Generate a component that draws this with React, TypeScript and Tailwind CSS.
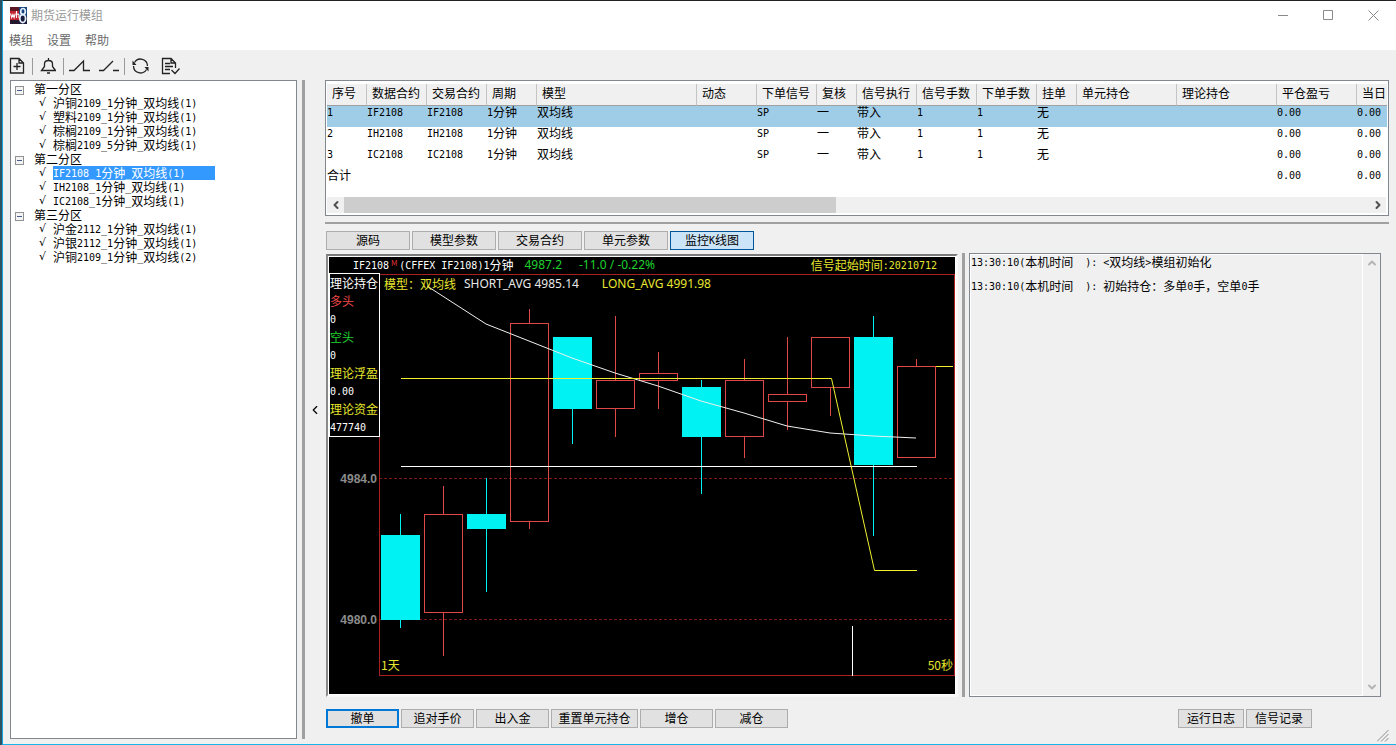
import { Fragment, type ReactNode } from 'react';
import { ChevronDown, ChevronLeft, ChevronRight, ChevronUp } from 'lucide-react';

const tree = [
    {
        name: '第一分区',
        items: ['沪铜2109_1分钟_双均线(1)', '塑料2109_1分钟_双均线(1)', '棕榈2109_1分钟_双均线(1)', '棕榈2109_5分钟_双均线(1)'],
    },
    {
        name: '第二分区',
        items: ['IF2108_1分钟_双均线(1)', 'IH2108_1分钟_双均线(1)', 'IC2108_1分钟_双均线(1)'],
    },
    {
        name: '第三分区',
        items: ['沪金2112_1分钟_双均线(1)', '沪银2112_1分钟_双均线(1)', '沪铜2109_1分钟_双均线(2)'],
    },
];
const selectedItem = 'IF2108_1分钟_双均线(1)';

const columns = [
    { title: '序号', width: 'w-[40px]' },
    { title: '数据合约', width: 'w-[60px]' },
    { title: '交易合约', width: 'w-[60px]' },
    { title: '周期', width: 'w-[50px]' },
    { title: '模型', width: 'w-[160px]' },
    { title: '动态', width: 'w-[60px]' },
    { title: '下单信号', width: 'w-[60px]' },
    { title: '复核', width: 'w-[40px]' },
    { title: '信号执行', width: 'w-[60px]' },
    { title: '信号手数', width: 'w-[60px]' },
    { title: '下单手数', width: 'w-[60px]' },
    { title: '挂单', width: 'w-[40px]' },
    { title: '单元持仓', width: 'w-[100px]' },
    { title: '理论持仓', width: 'w-[100px]' },
    { title: '平仓盈亏', width: 'w-[80px]' },
    { title: '当日', width: '' },
];

const rows = [
    ['1', 'IF2108', 'IF2108', '1分钟', '双均线', '', 'SP', '一', '带入', '1', '1', '无', '', '', '0.00', '0.00'],
    ['2', 'IH2108', 'IH2108', '1分钟', '双均线', '', 'SP', '一', '带入', '1', '1', '无', '', '', '0.00', '0.00'],
    ['3', 'IC2108', 'IC2108', '1分钟', '双均线', '', 'SP', '一', '带入', '1', '1', '无', '', '', '0.00', '0.00'],
    ['合计', '', '', '', '', '', '', '', '', '', '', '', '', '', '0.00', '0.00'],
];

const tabs = ['源码', '模型参数', '交易合约', '单元参数', '监控K线图'];

// [high, body top, body bottom, low, rising]
const candles: [number, number, number, number, boolean][] = [
    [240, 261, 346, 354, false],
    [212, 240, 338, 382, true],
    [204, 240, 255, 318, false],
    [35, 49, 247, 255, true],
    [63, 63, 135, 170, false],
    [42, 106, 134, 163, true],
    [78, 99, 106, 135, true],
    [106, 113, 163, 220, false],
    [85, 106, 162, 184, true],
    [63, 120, 127, 156, true],
    [63, 63, 113, 142, true],
    [42, 63, 191, 262, false],
    [85, 92, 183, 183, true],
];

const positionInfo = [
    { text: '理论持仓', color: 'text-white' },
    { text: '多头', color: 'text-[#f04848]' },
    { text: '0', color: 'text-white' },
    { text: '空头', color: 'text-[#1fd02f]' },
    { text: '0', color: 'text-white' },
    { text: '理论浮盈', color: 'text-[#e6e62e]' },
    { text: '0.00', color: 'text-white' },
    { text: '理论资金', color: 'text-[#e6e62e]' },
    { text: '477740', color: 'text-white' },
];

function Mixed({ text }: { text: string }) {
    return (
        <>
            {text.split(/([\x20-\x7e]+)/).map((part, i) =>
                i % 2 ? (
                    <span key={i} className="font-['DejaVu_Sans_Mono',monospace] text-[10px] leading-none align-[1px] whitespace-pre">{part}</span>
                ) : (
                    <Fragment key={i}>{part}</Fragment>
                )
            )}
        </>
    );
}

function TitleBar() {
    return (
        <header className="bg-white h-[49px] text-[12px]">
            <div className="flex items-center justify-between h-[28px] pl-[7px]">
                <div className="flex items-center gap-[4px]">
                    <svg width="17" height="17" viewBox="0 0 17 17" aria-hidden="true">
                        <rect width="17" height="17" fill="#1a1a3c" />
                        <rect width="9" height="5" fill="#5a1822" />
                        <rect y="4" width="9" height="9" fill="#c32530" />
                        <rect x="9" width="8" height="9" fill="#16407e" />
                        <rect y="13" width="9" height="4" fill="#25182e" />
                        <path d="M.5 6.500l1.200 4 1.200-3 1.200 3 1.200-4M6.500 4v7M6.500 8c1-1.500 2.500-1 2.500 0v3" stroke="#fff" strokeWidth="1.100" fill="none" />
                        <ellipse cx="13" cy="4.500" rx="2.300" ry="3" stroke="#e4f0fa" strokeWidth="1.700" fill="none" />
                        <ellipse cx="12.700" cy="11.500" rx="2.900" ry="4" stroke="#e4f0fa" strokeWidth="1.800" fill="none" />
                    </svg>
                    <h1 className="text-[#999999]">期货运行模组</h1>
                </div>
                <div className="flex text-[#8a8a8a]">
                    <button aria-label="最小化" className="w-[45px] h-[28px] grid place-items-center">
                        <svg width="10" height="10" stroke="currentColor"><path d="M0 5.500h10" /></svg>
                    </button>
                    <button aria-label="最大化" className="w-[45px] h-[28px] grid place-items-center">
                        <svg width="10" height="10" stroke="currentColor" fill="none"><path d="M.5.5h9v9h-9z" /></svg>
                    </button>
                    <button aria-label="关闭" className="w-[46px] h-[28px] grid place-items-center">
                        <svg width="11" height="11" stroke="currentColor"><path d="M.5.5l10 10M10.500.5l-10 10" /></svg>
                    </button>
                </div>
            </div>
            <nav className="flex gap-[14px] pl-[6px] text-[#6a6a6a] leading-[22px]">
                <button>模组</button>
                <button>设置</button>
                <button>帮助</button>
            </nav>
        </header>
    );
}

function ToolButton({ label, width, className = '', children }: { label: string; width: number; className?: string; children: ReactNode }) {
    return (
        <button aria-label={label} className={className}>
            <svg width={width} height="18" fill="none" stroke="#222" strokeWidth="1.300" className="block">
                {children}
            </svg>
        </button>
    );
}

function Divider() {
    return <div className="w-px h-[17px] bg-[#9a9a9a]" />;
}

function Toolbar() {
    return (
        <div className="flex items-center h-[30px] pl-[6px] pt-[2px]">
            <ToolButton label="新建" width={16} className="mr-[7px]">
                <path d="M1.500 1.500h8.500l4.500 4.500v10h-13zM10 1.500v4.500h4.500M8 6v7M4.500 9.500h7" />
            </ToolButton>
            <Divider />
            <ToolButton label="提醒" width={16} className="mx-[7px]">
                <path d="M1.500 13.500h14l-3-4V7c0-2.500-1.500-3.500-4-3.500S4.500 4.500 4.500 7v2.500zM8.500 3.500v-2.500M7 16h3" />
            </ToolButton>
            <Divider />
            <ToolButton label="启动" width={22} className="ml-[5px] mr-[7px]">
                <path d="M0 13.500h5L14.500 4v9.500H21" />
            </ToolButton>
            <ToolButton label="停止" width={22} className="mr-[4px]">
                <path d="M1 13.500h4.500L15 4M15 13.500h6" />
            </ToolButton>
            <Divider />
            <ToolButton label="刷新" width={19} className="ml-[6px] mr-[11px]">
                <path d="M3.500 5.500A7 7 0 0 1 16.500 9M15.500 12.500A7 7 0 0 1 2.500 9" />
                <path d="M1.500 3.500v4.500h4zM17.500 14.500V10h-4z" fill="#222" stroke="none" />
            </ToolButton>
            <ToolButton label="检查" width={19}>
                <path d="M9 16.500H1.500v-15h8.500l4.500 4.500V11M10 1.500v4.500h4.500M4 6.500h5M4 9.500h8M4 12.500h5M10.500 13l3.500 3.500 4.500-5" />
            </ToolButton>
        </div>
    );
}

function ModuleTree() {
    return (
        <aside className="w-[287px] shrink-0 bg-white border border-[#828790] pt-px text-[12px] leading-[14px]">
            <ul>
                {tree.map((group) => (
                    <li key={group.name}>
                        <div className="flex items-center h-[14px] pl-[4px] gap-[10px]">
                            <button aria-label={`收起${group.name}`} className="w-[9px] h-[9px] mt-[2px] border border-[#919191] bg-[#f4f4f4] grid place-items-center">
                                <span className="w-[5px] h-px bg-[#4a5a90]" />
                            </button>
                            <span>{group.name}</span>
                        </div>
                        <ul>
                            {group.items.map((item) => (
                                <li key={item} className="flex h-[14px] pl-[28px] whitespace-nowrap">
                                    <span className="w-[14px] font-['DejaVu_Sans',sans-serif] text-[11px]">√</span>
                                    <span className={item === selectedItem ? 'w-[162px] bg-[#3399ff] text-white' : ''}>
                                        <Mixed text={item} />
                                    </span>
                                </li>
                            ))}
                        </ul>
                    </li>
                ))}
            </ul>
        </aside>
    );
}

function ModuleTable() {
    return (
        <section className="border border-[#828790] bg-white p-px pt-[3px] h-[136px] flex flex-col text-[12px] overflow-hidden">
            <table className="table-fixed w-full whitespace-nowrap text-left border-separate border-spacing-0">
                <thead>
                    <tr className="bg-[#f0f0f0]">
                        {columns.map((col) => (
                            <th key={col.title} className={`${col.width} h-[22px] font-normal p-0 align-top overflow-hidden border-b border-b-[#a0a0a0] border-r border-r-[#c4c4c4] last:border-r-0`}>
                                <div className="pl-[5px] leading-[18px]">{col.title}</div>
                            </th>
                        ))}
                    </tr>
                </thead>
                <tbody>
                    {rows.map((row, r) => (
                        <tr key={r} className={r === 0 ? 'bg-[#9fcde8]' : ''}>
                            {row.map((cell, c) => (
                                <td key={c} className="h-[21px] p-0 align-top leading-[12px]">
                                    <Mixed text={cell} />
                                </td>
                            ))}
                        </tr>
                    ))}
                </tbody>
            </table>
            <div className="mt-auto mb-px mr-px h-[16px] bg-[#f0f0f0] flex items-center text-[#505050]">
                <button aria-label="向左滚动" className="w-[17px] grid place-items-center"><ChevronLeft size={12} strokeWidth={4} /></button>
                <div className="flex-1 h-full">
                    <div className="h-full w-[48%] bg-[#cdcdcd]" />
                </div>
                <button aria-label="向右滚动" className="w-[17px] grid place-items-center"><ChevronRight size={12} strokeWidth={4} /></button>
            </div>
        </section>
    );
}

function Chart() {
    return (
        <div className="flex-1 min-w-0 mt-px border-2 border-r-[#f8f8f8] border-b-[#f8f8f8] border-l-[#8a8a8a] border-t-[#7a7a7a] bg-white p-px">
            <div className="bg-black h-full text-[12px] whitespace-nowrap overflow-hidden">
                <div className="flex h-[17px] leading-[16px] pl-[24px] pr-[18px] text-white">
                    <span><Mixed text="IF2108" /></span>
                    <sup className="w-[10px] text-[8px] top-0 leading-[12px] text-[#e03434] text-center">M</sup>
                    <span><Mixed text="(CFFEX IF2108)1分钟" /></span>
                    <span className="ml-[11px] font-['Noto_Sans',sans-serif] text-[#1fd02f]">4987.2</span>
                    <span className="ml-[17px] font-['Noto_Sans',sans-serif] text-[#1fd02f]">-11.0 / -0.22%</span>
                    <span className="ml-auto text-[#e6e62e]"><Mixed text="信号起始时间:20210712" /></span>
                </div>
                <div className="relative">
                    <svg viewBox="0 0 626 419" className="block w-full" fill="none">
                        <g stroke="#a82020">
                            <path d="M50 204.500h575M50 345.500h575" strokeDasharray="3 2" stroke="#7c1818" />
                            <rect x="50.500" y="0.500" width="575" height="401" />
                        </g>
                        {candles.map(([high, top, bottom, low, rising], i) => {
                            const x = 71 + i * 43;
                            return (
                                <g key={i} stroke={rising ? '#e04848' : '#00f2f2'}>
                                    <path d={`M${x + 0.5} ${high}V${top}M${x + 0.5} ${bottom}V${low}`} />
                                    {rising ? (
                                        <rect x={x - 18.5} y={top + 0.5} width={38} height={bottom - top} />
                                    ) : (
                                        <rect x={x - 19} y={top} width={39} height={bottom - top} fill="#00f2f2" stroke="none" />
                                    )}
                                </g>
                            );
                        })}
                        <path d="M98 12L157 50L200 67L243 84L286 99L329 112L372 127L415 139L458 152L501 159L544 162L587 164" stroke="#f0f0f0" />
                        <path d="M72 192.500H588M523.500 352V402" stroke="#fff" />
                        <path d="M72 104.500H502.500L545.500 296.500H588M607 92.500H624" stroke="#f0f030" />
                        <g fontFamily="Liberation Sans, sans-serif" fontWeight="bold" fontSize="12" fill="#8c8c8c" textAnchor="end">
                            <text x="48" y="209">4984.0</text>
                            <text x="48" y="350">4980.0</text>
                        </g>
                        <g fontSize="12" fill="#e6e62e">
                            <text x="52" y="396">1天</text>
                            <text x="624" y="396" textAnchor="end">50秒</text>
                        </g>
                    </svg>
                    <div className="absolute left-0 -top-px w-[51px] border border-white bg-black leading-[18px]">
                        {positionInfo.map((line, i) => (
                            <div key={i} className={`${line.color} h-[18px]`}><Mixed text={line.text} /></div>
                        ))}
                    </div>
                    <div className="absolute left-[55px] top-px flex leading-[18px] text-[#e6e62e]">
                        <span>模型：双均线</span>
                        <span className="ml-[8px] font-['Noto_Sans',sans-serif] text-[#e8e8e8]">SHORT_AVG 4985.14</span>
                        <span className="ml-[23px] font-['Noto_Sans',sans-serif]">LONG_AVG 4991.98</span>
                    </div>
                </div>
            </div>
        </div>
    );
}

function LogPanel() {
    return (
        <div className="w-[412px] shrink-0 border border-[#828790] flex text-[12px]">
            <div role="log" className="flex-1 border border-white leading-[14px] space-y-[10px] whitespace-nowrap">
                <p className="h-[14px]"><Mixed text="13:30:10(本机时间  ): <双均线>模组初始化" /></p>
                <p className="h-[14px]"><Mixed text="13:30:10(本机时间  ): 初始持仓：多单0手，空单0手" /></p>
            </div>
            <div className="w-[17px] flex flex-col justify-between items-center py-[3px] text-[#b4b4b4]">
                <button aria-label="向上滚动"><ChevronUp size={12} strokeWidth={4} /></button>
                <button aria-label="向下滚动"><ChevronDown size={12} strokeWidth={4} /></button>
            </div>
        </div>
    );
}

function PushButton({ label, width = 'w-[73px]', primary = false }: { label: string; width?: string; primary?: boolean }) {
    return (
        <button className={`${width} h-[19px] leading-[13px] pb-[2px] text-[12px] bg-[#e1e1e1] ${primary ? 'border-2 border-[#0078d7]' : 'border border-[#adadad]'}`}>
            {label}
        </button>
    );
}

export default function App() {
    return (
        <div className="min-h-screen flex bg-[#2c5263] pl-[2px]">
            <div className="flex-1 min-w-0 flex flex-col bg-[#f0f0f0] text-black border-t border-t-[#222] border-l border-l-[#18a4d8] border-b border-b-[#18b4ea] font-['Noto_Sans_CJK_SC',sans-serif]">
                <TitleBar />
                <Toolbar />
                <main className="flex-1 flex px-[7px]">
                    <div className="flex pb-[5px]">
                        <ModuleTree />
                        <div className="ml-[5px] w-[3px] bg-[#a0a0a0]" />
                    </div>
                    <button aria-label="收起列表" className="w-[20px] pb-[5px] grid place-items-center">
                        <ChevronLeft size={14} strokeWidth={2} />
                    </button>
                    <div className="flex-1 min-w-0 flex flex-col">
                        <ModuleTable />
                        <div className="mt-[6px] h-[2px] bg-[#a0a0a0]" />
                        <div role="tablist" className="flex gap-[2px] mt-[7px] pl-px">
                            {tabs.map((tab) => (
                                <button
                                    key={tab}
                                    role="tab"
                                    aria-selected={tab === '监控K线图'}
                                    className={`w-[84px] h-[19px] leading-[15px] pb-[2px] text-[12px] border ${
                                        tab === '监控K线图' ? 'bg-[#cce4f7] border-[#00549a]' : 'bg-[#e1e1e1] border-[#adadad]'
                                    }`}
                                >
                                    <Mixed text={tab} />
                                </button>
                            ))}
                        </div>
                        <div className="flex-1 flex mt-[3px] pl-px pr-[8px]">
                            <Chart />
                            <div className="ml-[4px] mr-[4px] w-[3px] bg-[#a0a0a0]" />
                            <LogPanel />
                        </div>
                        <div className="flex mt-[12px] pl-px">
                            <div className="flex gap-[2px]">
                                <PushButton label="撤单" primary />
                                <PushButton label="追对手价" />
                                <PushButton label="出入金" />
                                <PushButton label="重置单元持仓" width="w-[87px]" />
                                <PushButton label="增仓" />
                                <PushButton label="减仓" />
                            </div>
                            <div className="flex gap-[2px] ml-auto mr-[77px]">
                                <PushButton label="运行日志" width="w-[66px]" />
                                <PushButton label="信号记录" width="w-[66px]" />
                            </div>
                        </div>
                        <svg width="12" height="12" className="self-end my-[2px]" stroke="#8c8c8c" aria-hidden="true">
                            <path d="M0 11.500L11.500 0M4 11.500L11.500 4M8 11.500L11.500 8" />
                        </svg>
                    </div>
                </main>
            </div>
        </div>
    );
}
